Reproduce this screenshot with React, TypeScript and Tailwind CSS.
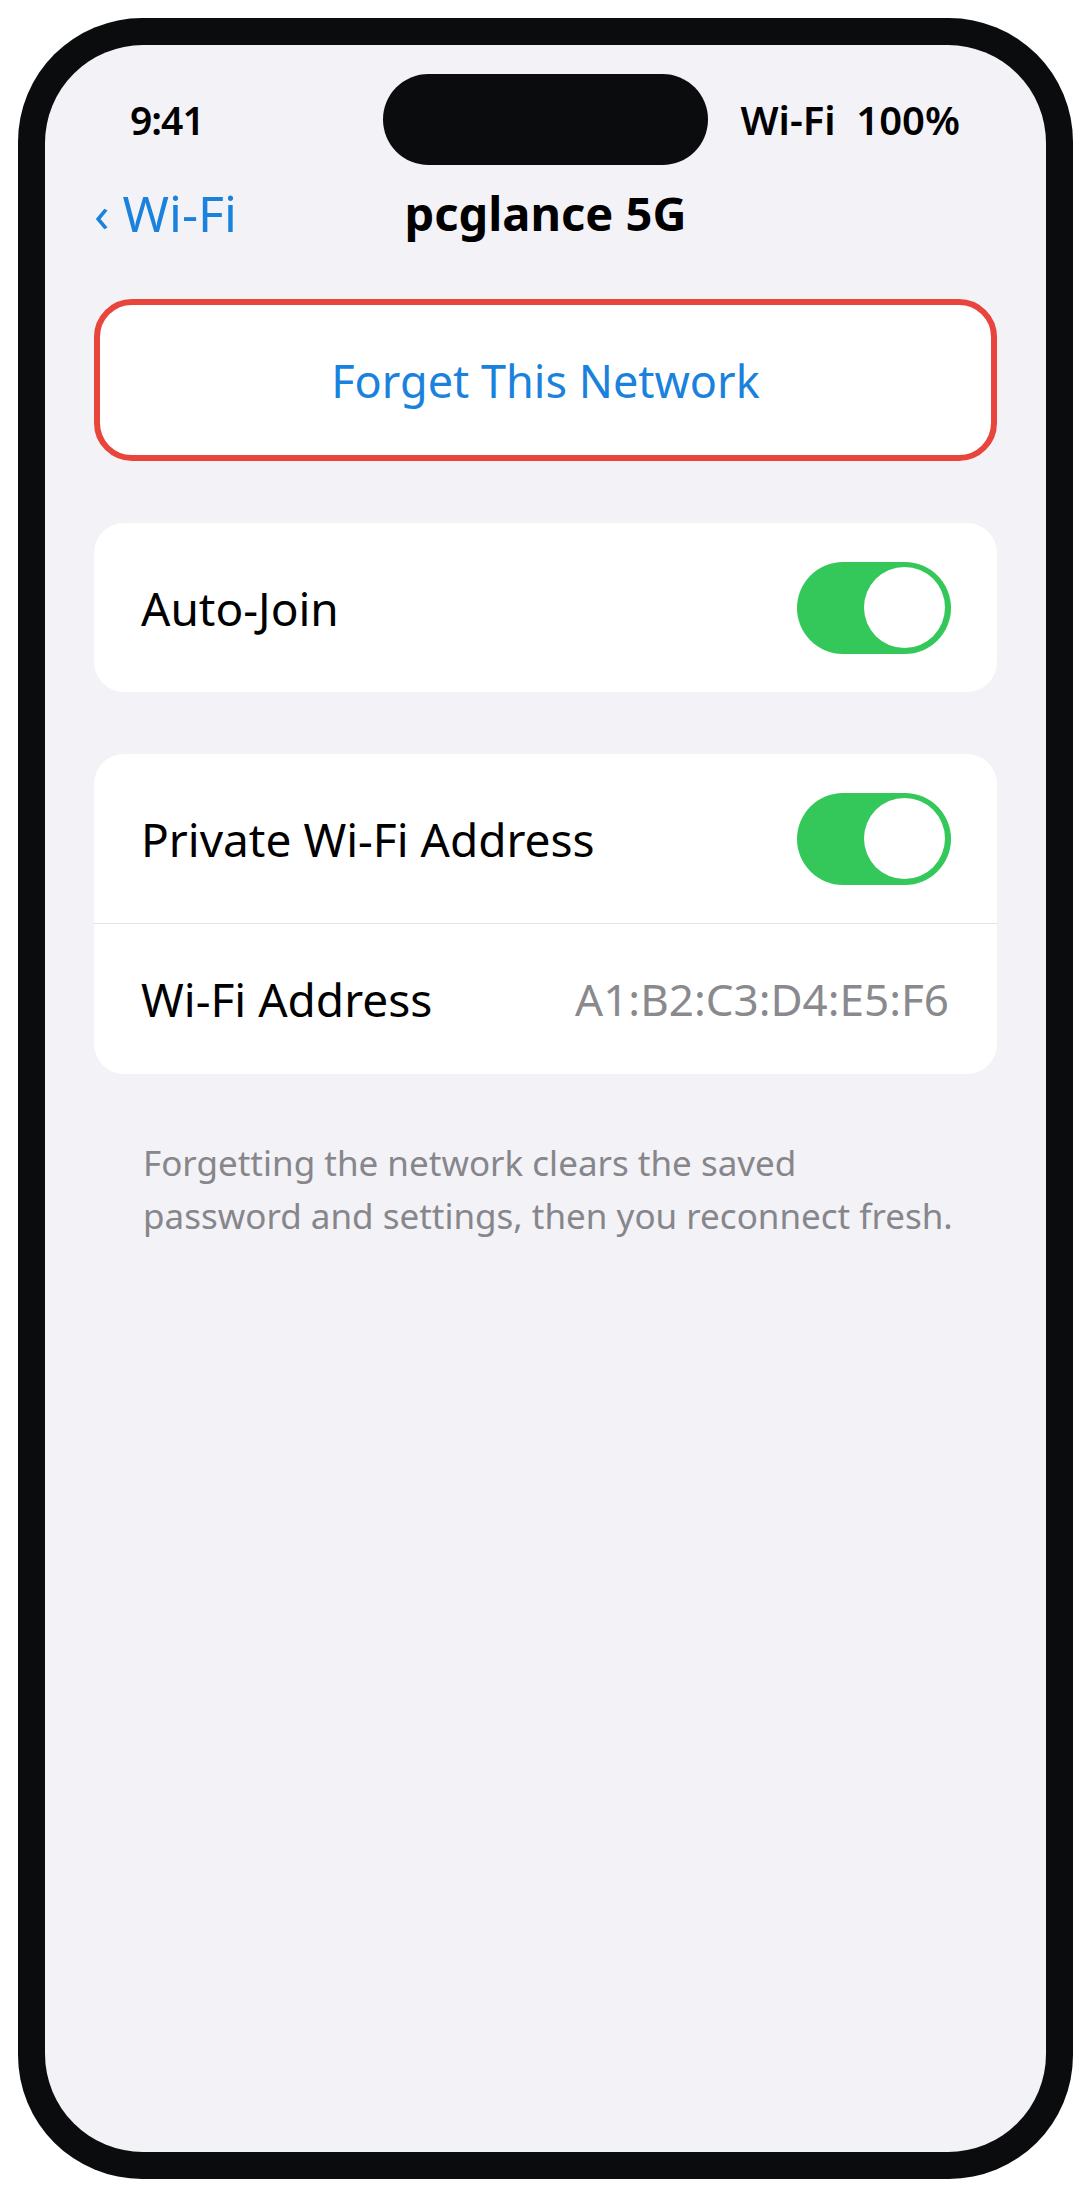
import React from "react";

const font = { fontFamily: '"Noto Sans", "Open Sans", sans-serif' };

function Toggle() {
  return (
    <div className="flex h-[92px] w-[154px] items-center justify-end rounded-full bg-[#34c759] pr-[6px]">
      <div className="h-[81px] w-[81px] rounded-full bg-white" />
    </div>
  );
}

export default function App() {
  return (
    <div className="min-h-[2196px] w-full bg-white pl-[18px] pt-[18px]" style={font}>
      <div className="h-[2161px] w-[1055px] rounded-[124px] bg-[#0b0c0e] p-[27px]">
        <div className="flex h-full w-full flex-col overflow-hidden rounded-[98px] bg-[#f2f2f7]">
          {/* status bar */}
          <div className="mt-[29px] flex h-[91px] items-center">
            <div className="flex-1 pl-[85px] text-[39px] font-semibold leading-none tracking-[-1px] text-black">
              9:41
            </div>
            <div className="h-[91px] w-[325px] rounded-full bg-[#0b0c0e]" />
            <div className="flex-1 pr-[86px] text-right text-[40px] font-semibold leading-none text-black whitespace-pre">
              {"Wi-Fi  100%"}
            </div>
          </div>

          {/* nav bar */}
          <div className="mt-[3px] grid h-[90px] grid-cols-[1fr_auto_1fr] items-center">
            <div className="flex items-center pl-[49px] text-[50px] leading-none text-[#1a82dc]">
              <span className="mr-[13px]">‹</span>
              <span>Wi-Fi</span>
            </div>
            <div className="text-[47px] font-bold leading-none text-black">pcglance 5G</div>
            <div />
          </div>

          {/* forget button */}
          <div className="mx-[49px] mt-[41px] flex h-[162px] items-center justify-center rounded-[38px] border-[6px] border-[#e8453c] bg-white">
            <span className="text-[45px] leading-none text-[#1a82dc]">Forget This Network</span>
          </div>

          {/* auto-join */}
          <div className="mx-[49px] mt-[62px] flex h-[169px] items-center justify-between rounded-[30px] bg-white pl-[47px] pr-[46px]">
            <span className="text-[46px] leading-none text-black">Auto-Join</span>
            <Toggle />
          </div>

          {/* private address card */}
          <div className="mx-[49px] mt-[62px] overflow-hidden rounded-[30px] bg-white">
            <div className="flex h-[169px] items-center justify-between pl-[47px] pr-[46px]">
              <span className="text-[46px] leading-none text-black">Private Wi-Fi Address</span>
              <Toggle />
            </div>
            <div className="h-px bg-[#e3e3e8]" />
            <div className="flex h-[150px] items-center justify-between pl-[47px] pr-[48px]">
              <span className="text-[46px] leading-none text-black">Wi-Fi Address</span>
              <span className="text-[44px] leading-none text-[#8a8a8e]">A1:B2:C3:D4:E5:F6</span>
            </div>
          </div>

          {/* footer */}
          <div className="mx-[49px] mt-[62px] pl-[49px] text-[35px] leading-[53px] text-[#86868b]">
            Forgetting the network clears the saved
            <br />
            password and settings, then you reconnect fresh.
          </div>
        </div>
      </div>
    </div>
  );
}
